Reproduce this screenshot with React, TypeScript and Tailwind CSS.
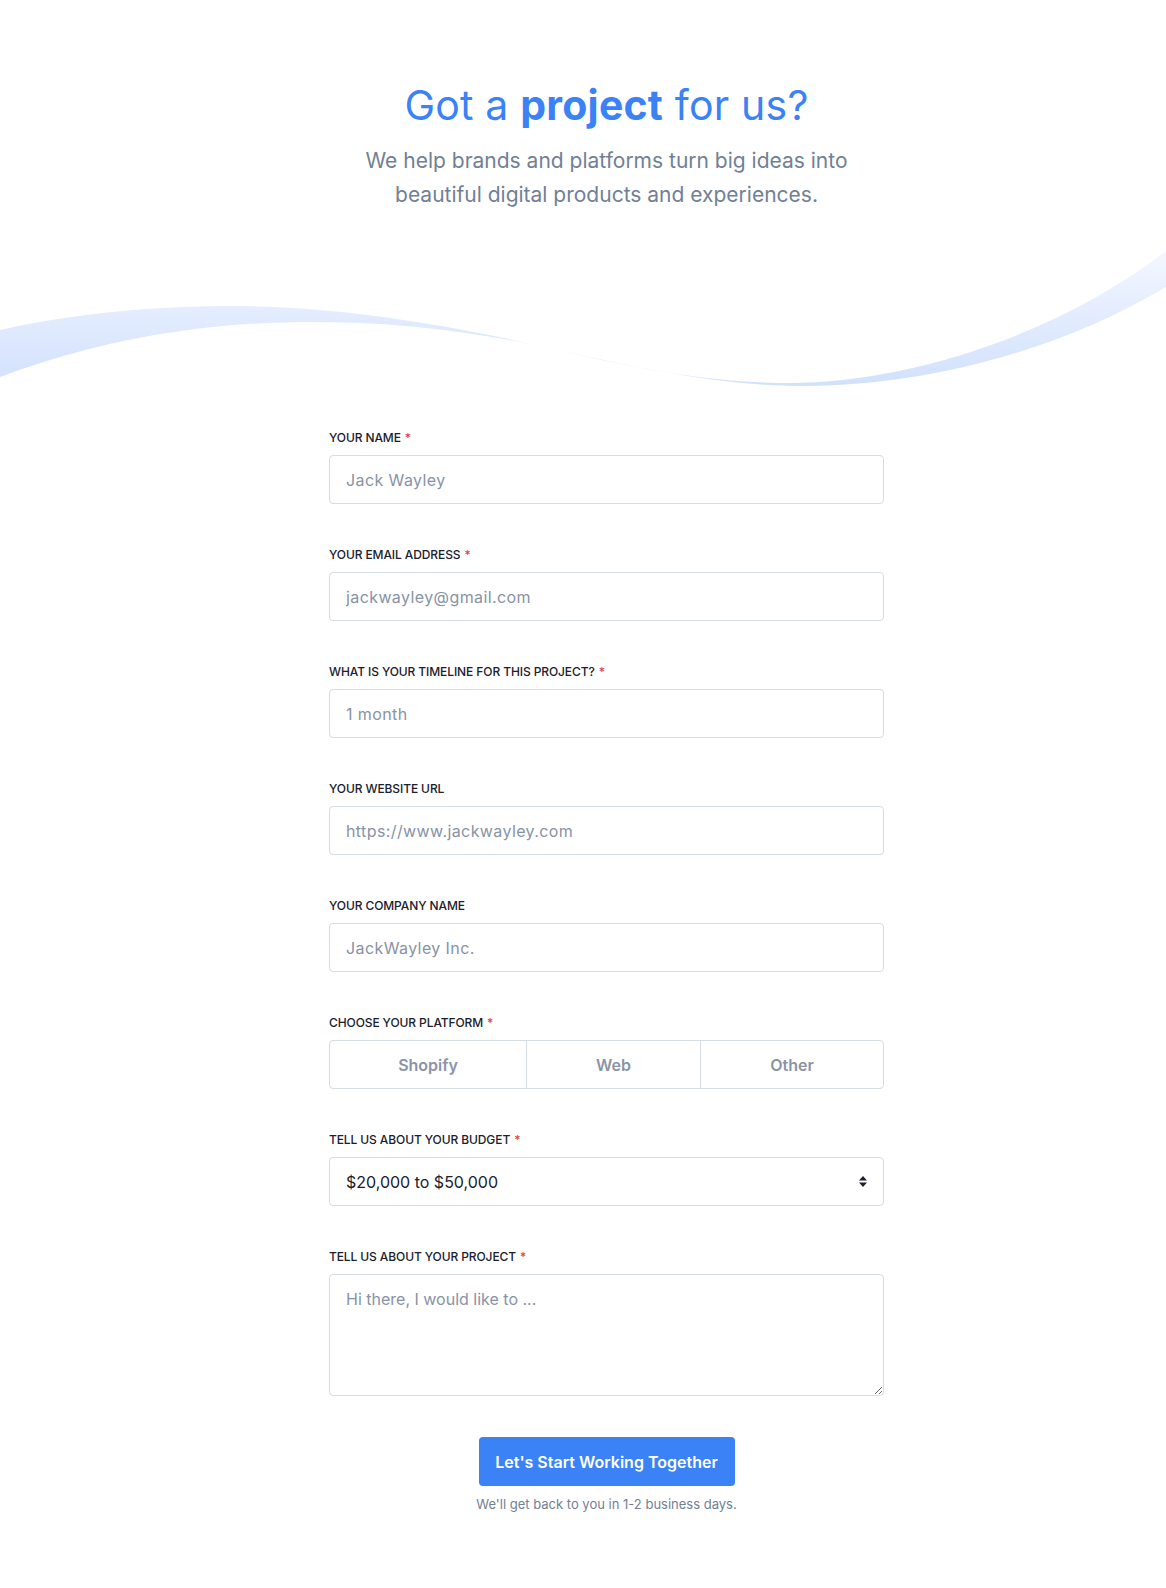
import React from "react";

const font = { fontFamily: "Inter, 'Noto Sans', sans-serif" };

function Label({ text, required }: { text: string; required?: boolean }) {
    return (
        <label className="block h-[19px] pt-[1px] mb-[8px] text-[12px] leading-[18px] font-medium text-[#1a202c] uppercase tracking-[-0.1px]">
            {text}
            {required && <span className="ml-[4px] text-[#e53e3e]">*</span>}
        </label>
    );
}

const inputCls =
    "block w-full h-[49px] px-[16px] rounded-[4px] border border-[#d6dce4] bg-white text-[16px] text-[#1a202c] placeholder:text-[#8793a6] outline-none";

function Field({ label, required, placeholder }: { label: string; required?: boolean; placeholder: string }) {
    return (
        <div>
            <Label text={label} required={required} />
            <input className={inputCls + " placeholder:tracking-[0.4px]"} placeholder={placeholder} />
        </div>
    );
}

function Wave() {
    return (
        <svg className="block w-full h-[140px]" viewBox="0 0 1166 140" preserveAspectRatio="none">
            <defs>
                <linearGradient id="wv" x1="0" y1="0" x2="0" y2="140" gradientUnits="userSpaceOnUse">
                    <stop offset="0" stopColor="#f4f7ff" />
                    <stop offset="1" stopColor="#d0e0fd" />
                </linearGradient>
            </defs>
            <path
                fill="url(#wv)"
                d="M0,80 C80,62 160,56 234,56 C340,56 450,75 558,100 C650,122 720,133 790,133 C900,133 1050,90 1166,1 L1166,37 C1060,100 930,135 805,136 C720,136 640,118 558,100 C470,80 390,72 312,72 C200,72 100,90 0,127 Z"
            />
        </svg>
    );
}

export default function App() {
    return (
        <div className="min-h-[1588px] bg-white" style={font}>
            {/* header */}
            <div className="flex flex-col items-center pt-[77px] pl-[47px]">
                <h1 className="text-[41px] leading-[56px] font-normal text-[#3b82f6] tracking-[0.2px]">
                    Got a <span className="font-bold">project</span> for us?
                </h1>
                <p className="mt-[11px] text-center text-[21px] leading-[34px] text-[#718096]">
                    We help brands and platforms turn big ideas into
                    <br />
                    beautiful digital products and experiences.
                </p>
            </div>

            <div className="mt-[38px]">
                <Wave />
            </div>

            {/* form */}
            <div className="flex justify-center pl-[47px] pt-[38px]">
                <form className="w-[555px] flex flex-col gap-[41px]" onSubmit={(e) => e.preventDefault()}>
                    <Field label="Your name" required placeholder="Jack Wayley" />
                    <Field label="Your email address" required placeholder="jackwayley@gmail.com" />
                    <Field label="What is your timeline for this project?" required placeholder="1 month" />
                    <Field label="Your website url" placeholder="https://www.jackwayley.com" />
                    <Field label="Your company name" placeholder="JackWayley Inc." />

                    <div>
                        <Label text="Choose your platform" required />
                        <div className="flex h-[49px] rounded-[4px] border border-[#d6dce4] overflow-hidden">
                            <button type="button" className="w-[197px] border-r border-[#d6dce4] text-[16px] font-semibold text-[#8a94a6]">
                                Shopify
                            </button>
                            <button type="button" className="w-[174px] border-r border-[#d6dce4] text-[16px] font-semibold text-[#8a94a6]">
                                Web
                            </button>
                            <button type="button" className="flex-1 text-[16px] font-semibold text-[#8a94a6]">
                                Other
                            </button>
                        </div>
                    </div>

                    <div>
                        <Label text="Tell us about your budget" required />
                        <div className="relative">
                            <select className={inputCls + " appearance-none"} defaultValue="b">
                                <option value="a">Under $20,000</option>
                                <option value="b">$20,000 to $50,000</option>
                                <option value="c">Over $50,000</option>
                            </select>
                            <svg className="absolute right-[17px] top-[19px] pointer-events-none" width="8" height="11" viewBox="0 0 8 11">
                                <path d="M4 0 L8 4.5 H0 Z M4 11 L0 6.5 H8 Z" fill="#1a202c" />
                            </svg>
                        </div>
                    </div>

                    <div>
                        <Label text="Tell us about your project" required />
                        <textarea
                            className="block w-full h-[122px] px-[16px] py-[12px] rounded-[4px] border border-[#d6dce4] bg-white text-[16px] leading-[24px] text-[#1a202c] placeholder:text-[#8793a6] outline-none"
                            placeholder="Hi there, I would like to ..."
                        />
                    </div>

                    <div className="flex flex-col items-center">
                        <button type="submit" className="h-[49px] w-[256px] rounded-[4px] bg-[#3b82f6] text-white text-[16px] font-semibold">
                            Let's Start Working Together
                        </button>
                        <p className="mt-[9px] text-[13px] leading-[18px] text-[#718096]">We'll get back to you in 1-2 business days.</p>
                    </div>
                </form>
            </div>
        </div>
    );
}
